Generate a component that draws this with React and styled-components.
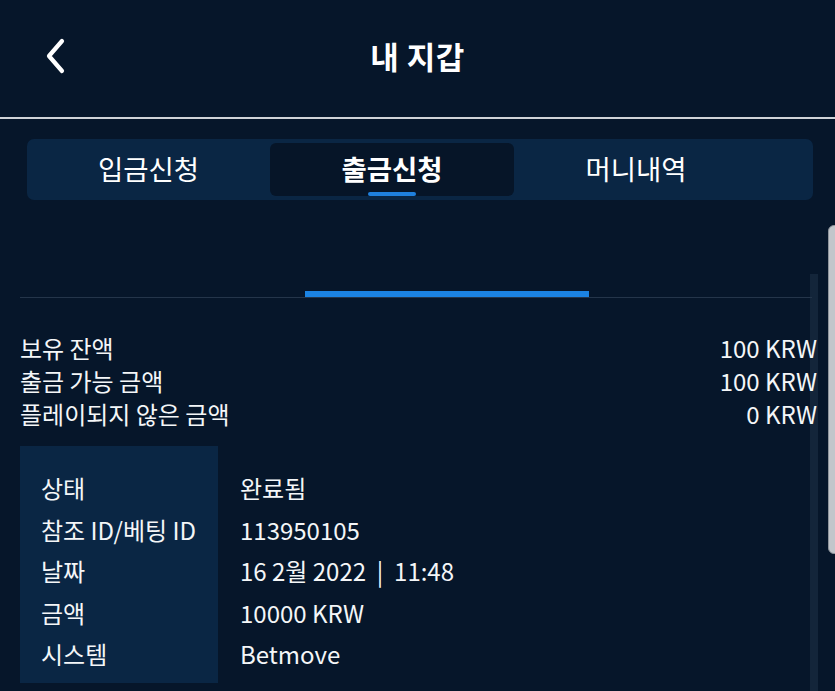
import styled, { createGlobalStyle } from "styled-components";

const GlobalStyle = createGlobalStyle`
  html, body {
    margin: 0;
    padding: 0;
    background: #06162a;
  }
  * {
    box-sizing: border-box;
  }
`;

const tabs = ["입금신청", "출금신청", "머니내역"];

const summary = [
  { label: "보유 잔액", value: "100 KRW" },
  { label: "출금 가능 금액", value: "100 KRW" },
  { label: "플레이되지 않은 금액", value: "0 KRW" },
];

const details = [
  { label: "상태", value: "완료됨" },
  { label: "참조 ID/베팅 ID", value: "113950105" },
  { label: "날짜", value: "16 2월 2022  |  11:48" },
  { label: "금액", value: "10000 KRW" },
  { label: "시스템", value: "Betmove" },
];

const BackIcon = () => (
  <svg width="24" height="36" viewBox="0 0 24 36" fill="none">
    <path
      d="M18 3 L5 18 L18 33"
      stroke="#ffffff"
      strokeWidth="4.2"
      strokeLinecap="round"
      strokeLinejoin="round"
    />
  </svg>
);

const App = () => {
  return (
    <Page>
      <GlobalStyle />
      <Header>
        <BackButton>
          <BackIcon />
        </BackButton>
        <Title>내 지갑</Title>
        <span />
      </Header>
      <HeaderLine />
      <TabBar>
        {tabs.map((t, i) => (
          <Tab key={t} $active={i === 1}>
            {t}
          </Tab>
        ))}
      </TabBar>
      <Content>
        <ScrollTrack />
        <Progress>
          <ProgressBar />
        </Progress>
        <Summary>
          {summary.map((row) => (
            <SummaryRow key={row.label}>
              <span>{row.label}</span>
              <span>{row.value}</span>
            </SummaryRow>
          ))}
        </Summary>
        <DetailTable>
          <LabelCol>
            {details.map((d) => (
              <DetailCell key={d.label}>{d.label}</DetailCell>
            ))}
          </LabelCol>
          <ValueCol>
            {details.map((d) => (
              <DetailCell key={d.label}>{d.value}</DetailCell>
            ))}
          </ValueCol>
        </DetailTable>
      </Content>
      <ScrollThumb />
    </Page>
  );
};

export default App;

const Page = styled.div`
  position: relative;
  width: 835px;
  height: 691px;
  overflow: hidden;
  background: #06162a;
  color: #f4f6f8;
  font-family: "Noto Sans CJK KR", "Noto Sans", sans-serif;
`;

const Header = styled.div`
  height: 117px;
  display: grid;
  grid-template-columns: 1fr auto 1fr;
  align-items: center;
  padding-bottom: 6px;
`;

const BackButton = styled.div`
  display: flex;
  align-items: center;
  height: 36px;
  margin-left: 44px;
`;

const Title = styled.h1`
  margin: 0;
  font-size: 31px;
  font-weight: 700;
  color: #ffffff;
  letter-spacing: 0.5px;
`;

const HeaderLine = styled.div`
  height: 2px;
  background: #cfd3d8;
`;

const TabBar = styled.div`
  margin: 20px 22px 0 27px;
  height: 61px;
  padding: 4px 0;
  background: #0a2644;
  border-radius: 7px;
  display: grid;
  grid-template-columns: 243px 244px 244px;
`;

const Tab = styled.div`
  position: relative;
  display: flex;
  align-items: center;
  justify-content: center;
  padding-bottom: 4px;
  font-size: 27.5px;
  font-weight: ${(p) => (p.$active ? 700 : 400)};
  color: #ffffff;
  border-radius: 6px;
  background: ${(p) => (p.$active ? "#061528" : "transparent")};

  &::after {
    content: "";
    display: ${(p) => (p.$active ? "block" : "none")};
    position: absolute;
    left: 50%;
    bottom: 0;
    width: 48px;
    height: 4px;
    margin-left: -24px;
    border-radius: 2px;
    background: #1f80dd;
  }
`;

const Content = styled.div`
  position: relative;
  padding: 0 18px 0 20px;
`;

const Progress = styled.div`
  position: relative;
  margin-top: 91px;
  margin-right: 5px;
  height: 7px;
  padding-left: 285px;
  border-bottom: 1px solid #24354a;
`;

const ProgressBar = styled.div`
  width: 284px;
  height: 6px;
  background: #1b83e3;
`;

const Summary = styled.div`
  position: relative;
  margin-top: 33px;
`;

const SummaryRow = styled.div`
  display: flex;
  justify-content: space-between;
  font-size: 24px;
  line-height: 33px;
`;

const DetailTable = styled.div`
  position: relative;
  display: flex;
  margin-top: 16px;
`;

const LabelCol = styled.div`
  width: 198px;
  padding: 21px 0 8px 21px;
  background: #0a2644;
`;

const ValueCol = styled.div`
  padding: 21px 0 8px 22px;
`;

const DetailCell = styled.div`
  font-size: 24px;
  line-height: 41.5px;
  white-space: pre;
`;

const ScrollTrack = styled.div`
  position: absolute;
  top: -17px;
  right: 17px;
  width: 8px;
  height: 500px;
  background: #13253a;
`;

const ScrollThumb = styled.div`
  position: absolute;
  top: 225px;
  right: -6px;
  width: 13px;
  height: 329px;
  border-radius: 6px;
  background: #c2c6cb;
  border: 1px solid #8e949b;
`;
